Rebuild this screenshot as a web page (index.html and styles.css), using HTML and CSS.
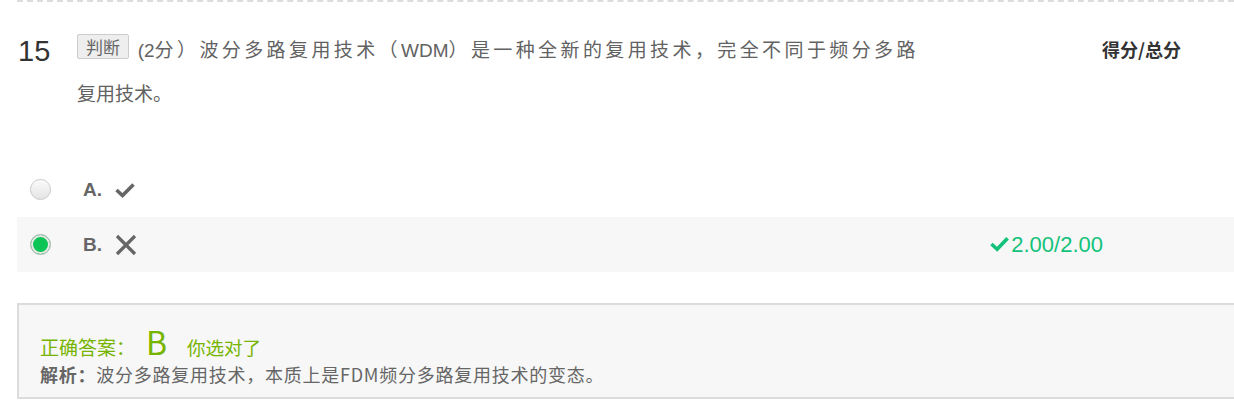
FILE: index.html
```html
<!DOCTYPE html>
<html lang="zh-CN">
<head>
<meta charset="utf-8">
<link rel="stylesheet" href="styles.css">
</head>
<body>
<div class="question">
  <div class="q-head">
    <div class="q-num">15</div>
    <div class="q-body">
      <div class="q-line q-line-first"><span class="q-tag">判断</span> <span class="latin">(2</span>分）波分多路复用技术（<span class="latin">WDM</span>）是一种全新的复用技术，完全不同于频分多路</div>
      <div class="q-line">复用技术。</div>
    </div>
    <div class="q-score-label">得分/总分</div>
  </div>
  <ul class="options">
    <li class="option">
      <span class="radio"></span>
      <span class="opt-label">A.</span>
      <svg class="opt-icon" viewBox="0 0 20 20" width="20" height="20"><path d="M1.5 10 L7.5 15.5 L18.5 4.5" fill="none" stroke="#666" stroke-width="3.6"/></svg>
    </li>
    <li class="option selected">
      <span class="radio checked"></span>
      <span class="opt-label">B.</span>
      <svg class="opt-icon" viewBox="0 0 22 22" width="22" height="22"><path d="M2 2 L20 20 M20 2 L2 20" fill="none" stroke="#666" stroke-width="3.2"/></svg>
      <span class="opt-score"><svg class="score-check" viewBox="0 0 20 20" width="21" height="19"><path d="M1.5 9.5 L7.5 15 L18.5 3.5" fill="none" stroke="#12c27a" stroke-width="3.8"/></svg>2.00/2.00</span>
    </li>
  </ul>
  <div class="answer">
    <div class="answer-line">
      <span class="answer-title">正确答案：</span><span class="answer-letter">B</span><span class="answer-ok">你选对了</span>
    </div>
    <div class="analysis"><b>解析：</b>波分多路复用技术，本质上是FDM频分多路复用技术的变态。</div>
  </div>
</div>
</body>
</html>
```

FILE: styles.css
```css
* { box-sizing: border-box; }
html, body { margin: 0; padding: 0; background: #fff; overflow: hidden; }
body {
  font-family: "Liberation Sans", "Noto Sans CJK SC", sans-serif;
  color: #666;
}
.question {
  margin-left: 17px;
  border-top: 2px dashed #dcdcdc;
  padding-top: 29px;
}
.q-head {
  display: grid;
  grid-template-columns: 60px 1025px auto;
  align-items: start;
}
.q-num {
  font-size: 29px;
  color: #333;
  line-height: 40px;
  padding-left: 1px;
}
.q-body { width: 860px; margin-top: -2px; }
.q-line {
  font-family: "Liberation Sans", "Noto Sans CJK SC", sans-serif;
  font-size: 19px;
  line-height: 44px;
  color: #626262;
  white-space: nowrap;
}
.q-line-first { letter-spacing: 3.4px; }
.latin { letter-spacing: 0; }
.q-tag {
  display: inline-block;
  font-family: "Noto Sans CJK SC", sans-serif;
  font-size: 17px;
  line-height: 23px;
  padding: 0 8px;
  letter-spacing: 0;
  background: #eee;
  border: 1px solid #ccc;
  border-radius: 2px;
  color: #666;
  vertical-align: 3px;
}
.q-score-label {
  font-family: "Noto Sans CJK SC", sans-serif;
  font-weight: bold;
  font-size: 18px;
  color: #333;
  line-height: 36px;
}
.options {
  list-style: none;
  margin: 45px 0 0;
  padding: 0;
}
.option {
  display: flex;
  align-items: center;
  height: 55px;
  padding-left: 13px;
}
.option.selected { background: #f7f7f7; }
.radio {
  width: 21px;
  height: 21px;
  border-radius: 50%;
  border: 1px solid #c8c8c8;
  background: linear-gradient(#fafafa, #e4e4e4);
  box-shadow: inset 0 1px 1px rgba(255,255,255,.8);
  flex: none;
}
.radio.checked {
  background: #0bc456;
  border: 1px solid #bbb;
  box-shadow: inset 0 0 0 2px #e8e8e8;
}
.opt-label {
  font-weight: bold;
  font-size: 19px;
  color: #666;
  margin-left: 32px;
  width: 32px;
}
.opt-icon { flex: none; }
.opt-score {
  margin-left: auto;
  margin-right: 131px;
  color: #12c27a;
  font-size: 22px;
  display: flex;
  align-items: center;
}
.score-check { margin-right: 1px; }
.answer {
  margin-top: 31px;
  border: 2px solid #dcdcdc;
  border-right: none;
  background: #f7f7f7;
  padding: 19px 0 9px 21px;
  font-family: "Noto Sans CJK SC", sans-serif;
}
.answer-line {
  color: #76b400;
  display: flex;
  align-items: baseline;
  line-height: 34px;
  height: 34px;
}
.answer-title { font-size: 19px; }
.answer-letter { font-size: 32px; margin: 0 20px 0 11px; line-height: 34px; }
.answer-ok { font-size: 18.5px; }
.analysis {
  margin-top: 2px;
  font-size: 18px;
  letter-spacing: 0.75px;
  color: #666;
  line-height: 28px;
}
.analysis b { font-weight: bold; }
```
